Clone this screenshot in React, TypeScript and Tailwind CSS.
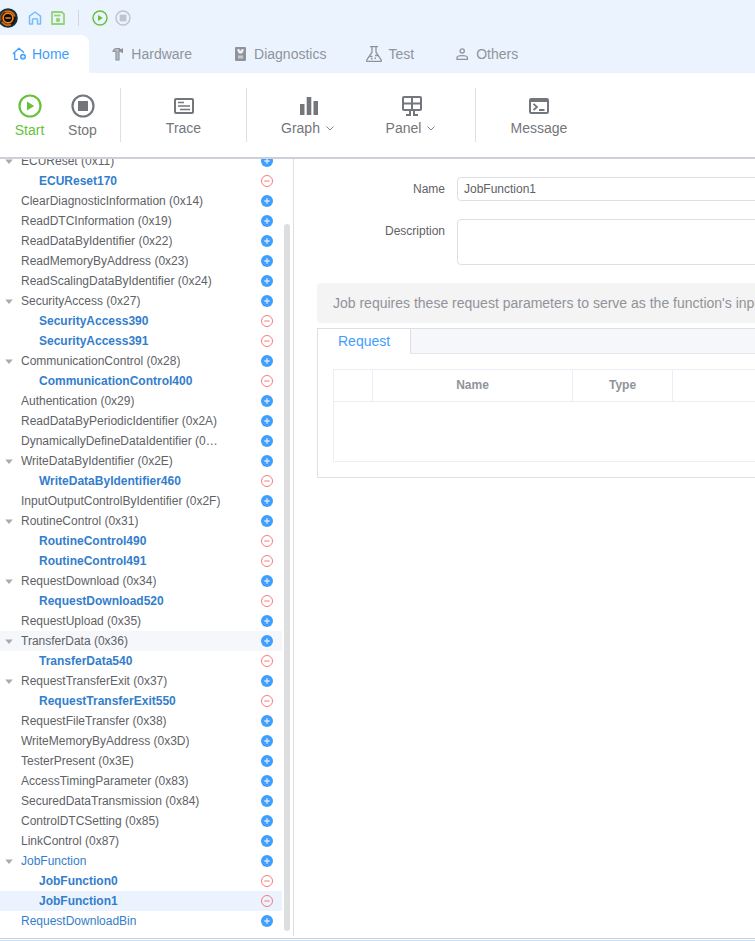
import { useState } from "react";
import type { ReactNode } from "react";
import clsx from "clsx";

interface Service {
  name: string;
  job?: boolean;
  hover?: boolean;
  children?: string[];
}

const services: Service[] = [
  { name: "ECUReset (0x11)", children: ["ECUReset170"] },
  { name: "ClearDiagnosticInformation (0x14)" },
  { name: "ReadDTCInformation (0x19)" },
  { name: "ReadDataByIdentifier (0x22)" },
  { name: "ReadMemoryByAddress (0x23)" },
  { name: "ReadScalingDataByIdentifier (0x24)" },
  { name: "SecurityAccess (0x27)", children: ["SecurityAccess390", "SecurityAccess391"] },
  { name: "CommunicationControl (0x28)", children: ["CommunicationControl400"] },
  { name: "Authentication (0x29)" },
  { name: "ReadDataByPeriodicIdentifier (0x2A)" },
  { name: "DynamicallyDefineDataIdentifier (0x2C)" },
  { name: "WriteDataByIdentifier (0x2E)", children: ["WriteDataByIdentifier460"] },
  { name: "InputOutputControlByIdentifier (0x2F)" },
  { name: "RoutineControl (0x31)", children: ["RoutineControl490", "RoutineControl491"] },
  { name: "RequestDownload (0x34)", children: ["RequestDownload520"] },
  { name: "RequestUpload (0x35)" },
  { name: "TransferData (0x36)", hover: true, children: ["TransferData540"] },
  { name: "RequestTransferExit (0x37)", children: ["RequestTransferExit550"] },
  { name: "RequestFileTransfer (0x38)" },
  { name: "WriteMemoryByAddress (0x3D)" },
  { name: "TesterPresent (0x3E)" },
  { name: "AccessTimingParameter (0x83)" },
  { name: "SecuredDataTransmission (0x84)" },
  { name: "ControlDTCSetting (0x85)" },
  { name: "LinkControl (0x87)" },
  { name: "JobFunction", job: true, children: ["JobFunction0", "JobFunction1"] },
  { name: "RequestDownloadBin", job: true },
];

function Logo() {
  return (
    <svg className="size-5" viewBox="0 0 20 20" fill="none">
      <circle cx="10" cy="10" r="9.8" fill="#12303f" />
      <circle cx="10" cy="10" r="7.8" fill="#20130f" />
      <path d="M3.200 13A7.400 7.400 0 0 1 8 3" stroke="#8a4a18" strokeWidth="1.400" />
      <path d="M7 3.800A7 7 0 0 1 16.800 8.500M13 16.300A7 7 0 0 1 4 13.800" stroke="#d06a14" strokeWidth="1.800" />
      <circle cx="10" cy="10" r="4.900" fill="#120b0a" stroke="#f0831a" strokeWidth="1.700" />
      <path d="M7.400 10h5.200" stroke="#e98a2a" strokeWidth="1.500" />
    </svg>
  );
}

function HouseIcon() {
  return (
    <svg className="size-4" viewBox="0 0 16 16" fill="none" stroke="#79bbff" strokeWidth="1.500">
      <path d="M2.500 14V6.200L8 2l5.500 4.200V14h-3V9.700A1 1 0 0 0 9.500 8.700h-3a1 1 0 0 0-1 1V14z" strokeLinejoin="round" />
    </svg>
  );
}

function SaveIcon() {
  return (
    <svg className="size-4" viewBox="0 0 16 16" fill="none" stroke="#95d475" strokeWidth="1.800">
      <path d="M2 2h9.800L14 4.200V14H2z" strokeLinejoin="round" />
      <path d="M4 5.500h6.500" />
      <circle cx="8" cy="10" r="2.200" fill="#95d475" stroke="none" />
    </svg>
  );
}

function PlayIcon({ className }: { className: string }) {
  return (
    <svg className={className} viewBox="0 0 24 24" fill="none">
      <circle cx="12" cy="12" r="10.500" stroke="currentColor" strokeWidth="2.200" />
      <path d="M9 7.500v9l7.200-4.500z" fill="currentColor" />
    </svg>
  );
}

function StopIcon({ className }: { className: string }) {
  return (
    <svg className={className} viewBox="0 0 24 24" fill="none">
      <circle cx="12" cy="12" r="10.500" stroke="currentColor" strokeWidth="2.200" />
      <path d="M7 7h10v10H7z" fill="currentColor" />
    </svg>
  );
}

function HomeTabIcon() {
  return (
    <svg className="size-4" viewBox="0 0 16 16" fill="none">
      <path d="M8 13.300H4.700V7.500H3.300L9 2.200 14 6.800" stroke="currentColor" strokeWidth="1.300" strokeLinejoin="round" />
      <circle cx="13" cy="10.800" r="3" fill="currentColor" />
      <path d="M11.300 10.800h3.400M13 9.100v3.400" stroke="#fff" />
    </svg>
  );
}

function HardwareIcon() {
  return (
    <svg className="size-4" viewBox="0 0 16 16" fill="none">
      <path d="M4 5.500C4.500 3.500 6 2.500 8 2.500h2.500v3H10v8.500H7V5.500z" fill="#b9bcc3" stroke="currentColor" strokeWidth="1.200" />
      <path d="M11 3.300l3-1v5l-3-1.500z" fill="currentColor" />
    </svg>
  );
}

function DiagnosticsIcon() {
  return (
    <svg className="size-4" viewBox="0 0 16 16">
      <rect x="3" y="1" width="11" height="14" rx="1" fill="currentColor" />
      <path d="M5.500 3h6v2L10 7.500H7L5.500 5z" fill="#ebf3ff" />
      <path d="M6 9.500h5v3H6z" fill="#c4c8cf" />
      <path d="M7.500 3h2v1.500h-2z" fill="currentColor" />
    </svg>
  );
}

function TestIcon() {
  return (
    <svg className="size-4" viewBox="1 1 16 16" fill="none" stroke="currentColor" strokeWidth="1.300">
      <path d="M5 1.700h8M7 1.700v5.500L1.800 15v1.300h14.400V15L11 7.200V1.700" />
      <path d="M4.500 11.500h3M10 10.500h3" />
      <path d="M6 13h1.500v1.500H6zM9.500 12.500H11V14H9.500z" fill="currentColor" stroke="none" />
    </svg>
  );
}

function OthersIcon() {
  return (
    <svg className="size-4" viewBox="0 0 16 16" fill="none" stroke="currentColor" strokeWidth="1.300">
      <circle cx="8.200" cy="5" r="2.100" />
      <path d="M3 13.300v-1.500C3 10.500 5 9.700 8.200 9.700s5.200.8 5.200 2.100v1.500z" />
    </svg>
  );
}

function TraceIcon() {
  return (
    <svg className="size-6" viewBox="0 0 24 24" fill="none" stroke="currentColor">
      <rect x="3" y="5" width="18" height="14" rx="1" strokeWidth="2" />
      <path d="M6 8.500h6M6 12h12M8 15.500h10" strokeWidth="1.600" />
    </svg>
  );
}

function GraphIcon() {
  return (
    <svg className="size-6" viewBox="0 0 24 24" fill="currentColor">
      <path d="M3 10h4.500v11H3zM9.700 3h4.600v18H9.700zM16.500 7H21v14h-4.500z" />
    </svg>
  );
}

function PanelIcon() {
  return (
    <svg className="size-6" viewBox="0 0 24 24" fill="none" stroke="currentColor" strokeWidth="2">
      <rect x="3" y="3" width="18" height="13" rx="1" />
      <path d="M3 9.500h18M12 3v13M10 16v5H6M14 16v5h4" />
    </svg>
  );
}

function MessageIcon() {
  return (
    <svg className="size-6" viewBox="0 0 24 24" fill="none" stroke="currentColor">
      <rect x="3" y="5" width="18" height="14" rx="1.200" strokeWidth="2" />
      <path d="M3 5h18v3H3z" fill="currentColor" stroke="none" />
      <path d="M6.500 9.800L10 13l-3.500 3.200M12 16h5.500" strokeWidth="1.800" />
    </svg>
  );
}

function Chevron() {
  return (
    <svg className="size-3" viewBox="0 0 12 12" fill="none" stroke="currentColor" strokeWidth="0.900">
      <path d="M2.500 4.500L6 8l3.500-3.500" />
    </svg>
  );
}

function AddButton({ name }: { name: string }) {
  return (
    <button type="button" aria-label={`Add ${name}`} className="text-[#409eff]">
      <svg className="size-3" viewBox="0 0 12 12">
        <circle cx="6" cy="6" r="6" fill="currentColor" />
        <path d="M3.300 6h5.400M6 3.300v5.400" stroke="#d3e8ff" strokeWidth="1.400" />
      </svg>
    </button>
  );
}

function RemoveButton({ name }: { name: string }) {
  return (
    <button type="button" aria-label={`Remove ${name}`} className="text-[#f56c6c]">
      <svg className="size-3" viewBox="0 0 12 12" fill="none" stroke="currentColor">
        <circle cx="6" cy="6" r="5.500" strokeWidth="0.900" />
        <path d="M3.300 6h5.400" strokeWidth="0.900" />
      </svg>
    </button>
  );
}

interface ToolProps {
  icon: ReactNode;
  label: string;
  menu?: boolean;
  className?: string;
}

function Tool({ icon, label, menu, className }: ToolProps) {
  return (
    <button type="button" className={clsx("flex flex-col items-center pt-0.5 text-sm", className)}>
      {icon}
      <span className="flex items-center gap-1">
        {label}
        {menu ? <Chevron /> : null}
      </span>
    </button>
  );
}

function Divider() {
  return <div className="h-[54px] w-px shrink-0 bg-[#dcdfe6]" />;
}

const tabs = [
  { name: "Home", icon: <HomeTabIcon /> },
  { name: "Hardware", icon: <HardwareIcon /> },
  { name: "Diagnostics", icon: <DiagnosticsIcon /> },
  { name: "Test", icon: <TestIcon /> },
  { name: "Others", icon: <OthersIcon /> },
];

function Header() {
  const [active, setActive] = useState("Home");
  return (
    <header>
      <div className="bg-[#ebf3ff]">
        <div className="flex h-[35px] items-center pt-px">
          <div className="-ml-0.5 mr-[9px]">
            <Logo />
          </div>
          <button type="button" aria-label="Home page" className="mr-[7px]"><HouseIcon /></button>
          <button type="button" aria-label="Save"><SaveIcon /></button>
          <div className="ml-3 mr-[13px] h-4 w-px bg-[#d4d7de]" />
          <button type="button" aria-label="Start" className="mr-[7px] text-[#67c23a]">
            <PlayIcon className="size-4" />
          </button>
          <button type="button" aria-label="Stop" className="text-[#c0c4cc]">
            <StopIcon className="size-4" />
          </button>
        </div>
        <nav className="flex h-[38px]">
          {tabs.map((tab) => (
            <button
              key={tab.name}
              type="button"
              onClick={() => setActive(tab.name)}
              className={clsx(
                "flex items-center gap-1.5 px-5 text-sm first:pl-2.5",
                active === tab.name ? "rounded-tr-lg bg-white text-[#409eff]" : "text-[#909399]"
              )}
            >
              {tab.icon}
              {tab.name}
            </button>
          ))}
        </nav>
      </div>
      <div className="flex h-[86px] items-center border-b-2 border-[#cdd0d6] text-[#73767a]">
        <div className="flex pl-[3px] pr-[11px] pt-0.5">
          <Tool icon={<PlayIcon className="mb-0.5 size-6" />} label="Start" className="w-[53px] text-[#67c23a]" />
          <Tool icon={<StopIcon className="mb-0.5 size-6" />} label="Stop" className="w-[53px]" />
        </div>
        <Divider />
        <Tool icon={<TraceIcon />} label="Trace" className="w-[125px]" />
        <Divider />
        <div className="flex pl-2.5 pr-3">
          <Tool icon={<GraphIcon />} label="Graph" menu className="w-[103px]" />
          <Tool icon={<PanelIcon />} label="Panel" menu className="w-[103px]" />
        </div>
        <Divider />
        <Tool icon={<MessageIcon />} label="Message" className="w-[126px]" />
      </div>
    </header>
  );
}

function ServiceTree() {
  const [selected, setSelected] = useState("JobFunction1");
  return (
    <aside className="flex w-[294px] shrink-0 gap-0.5 overflow-hidden border-r border-[#dcdfe6] pr-[3px] text-xs">
      <ul className="-mt-2 mb-[5px] min-w-0 flex-1">
        {services.map((service) => (
          <li key={service.name}>
            <div className={clsx("flex h-5 items-center pl-[3px] pr-[9px]", service.hover && "bg-[#f5f7fa]")}>
              <svg className={clsx("mr-1.5 size-3 shrink-0", !service.children && "invisible")} viewBox="0 0 12 12">
                <path d="M2.200 4.500h7.600L6 9z" fill="#a8abb2" />
              </svg>
              <span className={clsx("max-w-[201px] truncate", service.job ? "text-[#337ecc]" : "text-[#606266]")}>
                {service.name}
              </span>
              <span className="ml-auto flex">
                <AddButton name={service.name} />
              </span>
            </div>
            {service.children?.map((child) => (
              <div
                key={child}
                className={clsx("flex h-5 items-center justify-between pl-[39px] pr-[9px]", selected === child && "bg-[#ebf3ff]")}
              >
                <button type="button" onClick={() => setSelected(child)} className="font-bold text-[#337ecc]">
                  {child}
                </button>
                <span className="flex">
                  <RemoveButton name={child} />
                </span>
              </div>
            ))}
          </li>
        ))}
      </ul>
      <div className="mb-[5px] mt-[65px] w-1.5 rounded-full bg-[#dddee0]" />
    </aside>
  );
}

function JobForm() {
  return (
    <main className="min-w-0 flex-1 overflow-hidden">
      <div className="min-w-[640px] px-[23px] pt-[18px]">
        <form className="text-xs text-[#606266]">
          <div className="mb-[18px] flex">
            <label htmlFor="name" className="w-[140px] pr-3 text-right leading-6">Name</label>
            <input
              id="name"
              defaultValue="JobFunction1"
              className="h-6 flex-1 rounded border border-[#dcdfe6] px-1.5 outline-none"
            />
          </div>
          <div className="mb-[18px] flex">
            <label htmlFor="description" className="w-[140px] pr-3 text-right leading-6">Description</label>
            <textarea
              id="description"
              className="h-[46px] flex-1 resize-none rounded border border-[#dcdfe6] px-1.5 py-1 outline-none"
            />
          </div>
        </form>
        <p className="rounded bg-[#f4f4f5] px-4 text-sm leading-10 text-[#909399]">
          Job requires these request parameters to serve as the function's input
        </p>
        <section className="mt-[5px] border border-[#dcdfe6]">
          <div className="flex h-[25px] border-b border-[#e4e7ed] bg-[#f5f7fa]">
            <button type="button" className="-mb-px border-r border-[#dcdfe6] bg-white px-5 pb-0.5 text-sm text-[#409eff]">
              Request
            </button>
          </div>
          <div className="p-[15px]">
            <table className="w-full table-fixed border-collapse text-xs text-[#909399]">
              <thead>
                <tr className="h-8">
                  <th className="w-[39px] border border-[#ebeef5]" />
                  <th className="w-[200px] border border-[#ebeef5] pb-0.5">Name</th>
                  <th className="w-[100px] border border-[#ebeef5] pb-0.5">Type</th>
                  <th className="border border-[#ebeef5]" />
                </tr>
              </thead>
              <tbody>
                <tr className="h-[60px]">
                  <td colSpan={4} className="border border-[#ebeef5]" />
                </tr>
              </tbody>
            </table>
          </div>
        </section>
      </div>
    </main>
  );
}

export default function App() {
  return (
    <div className="overflow-hidden bg-white font-['Liberation_Sans',Arial,sans-serif]">
      <Header />
      <div className="flex">
        <ServiceTree />
        <JobForm />
      </div>
      <footer className="mt-0.5 h-[3px] border-b border-t border-b-[#c6e2ff] border-t-[#cdd0d6]" />
    </div>
  );
}
